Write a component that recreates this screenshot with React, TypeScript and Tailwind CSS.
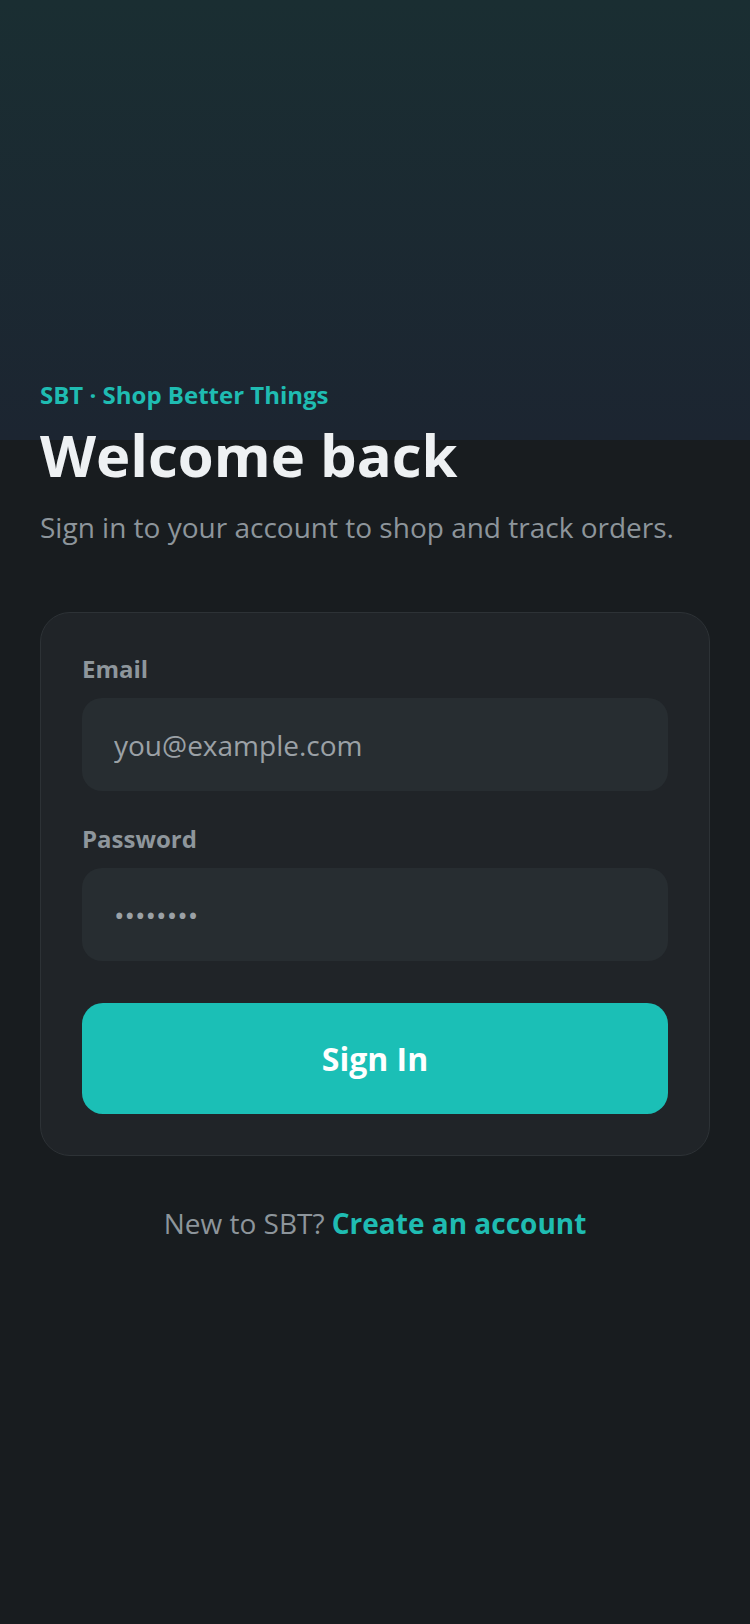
import React from "react";

const font = { fontFamily: '"Open Sans", "Noto Sans", sans-serif' };

const Field = ({ label, type, placeholder, value }: { label: string; type: string; placeholder?: string; value?: string }) => (
  <label className="block">
    <span className="block text-[24px] leading-[30px] font-bold text-[#8e969c]">{label}</span>
    <input
      type={type}
      placeholder={placeholder}
      defaultValue={value}
      className="mt-[14px] block h-[93px] w-full rounded-[20px] bg-[#272d31] px-8 text-[28px] text-[#9ba1a6] placeholder:text-[#9ba1a6] outline-none"
      style={font}
    />
  </label>
);

export default function App() {
  return (
    <div
      className="min-h-[1624px] w-full bg-[#181c1f] bg-[linear-gradient(to_bottom,#1a2e32_0px,#1c2531_440px,#181c1f_440px)] px-10 pt-[381px]"
      style={font}
    >
      <p className="text-[24px] leading-[28px] font-bold text-[#1fbcb2]">SBT · Shop Better Things</p>
      <h1 className="mt-[15px] text-[58px] leading-[62px] font-bold text-[#eef1f3]">Welcome back</h1>
      <p className="mt-[23px] text-[28px] leading-[36px] text-[#8d959b]">
        Sign in to your account to shop and track orders.
      </p>

      <form
        className="mt-[67px] rounded-[30px] border border-[#2d3236] bg-[#202428] p-[41px]"
        onSubmit={(e) => e.preventDefault()}
      >
        <Field label="Email" type="email" placeholder="you@example.com" />
        <div className="mt-[33px]">
          <Field label="Password" type="password" value="password" />
        </div>
        <button
          type="submit"
          className="mt-[42px] flex h-[111px] w-full items-center justify-center rounded-[21px] bg-[#1bbfb6] text-[32px] font-bold text-white"
        >
          Sign In
        </button>
      </form>

      <p className="mt-[49px] text-center text-[28px] leading-[36px] text-[#8d959b]">
        New to SBT? <a href="#" className="font-bold text-[#1fbcb2]">Create an account</a>
      </p>
    </div>
  );
}
